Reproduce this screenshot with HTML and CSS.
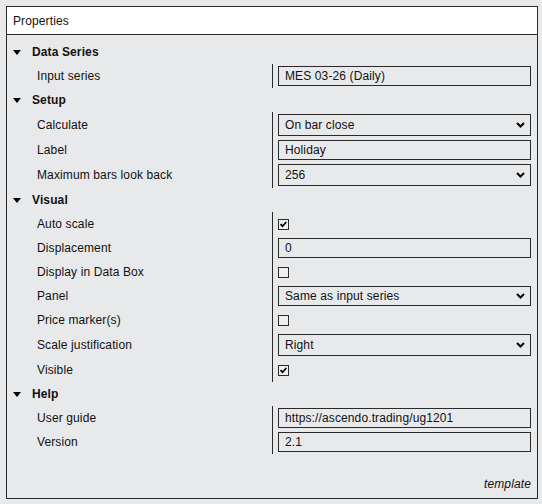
FILE: index.html
```html
<!DOCTYPE html>
<html>
<head>
<meta charset="utf-8">
<link rel="stylesheet" href="styles.css">
</head>
<body>
<div class="panel">
  <div class="title">Properties</div>
  <div class="content">
    <div class="group">
      <div class="ghead"><span class="tri"></span><span>Data Series</span></div>
      <div class="rows">
        <div class="lbl">Input series</div>
        <div class="val"><div class="field">MES 03-26 (Daily)</div></div>
      </div>
    </div>
    <div class="group">
      <div class="ghead"><span class="tri"></span><span>Setup</span></div>
      <div class="rows">
        <div class="lbl tall">Calculate</div>
        <div class="val tall"><div class="field sel">On bar close<svg class="chev" width="9" height="6" viewBox="0 0 9 6"><path d="M1 1L4.5 4.5L8 1" fill="none" stroke="#000" stroke-width="2"/></svg></div></div>
        <div class="lbl">Label</div>
        <div class="val"><div class="field">Holiday</div></div>
        <div class="lbl tall">Maximum bars look back</div>
        <div class="val tall"><div class="field sel">256<svg class="chev" width="9" height="6" viewBox="0 0 9 6"><path d="M1 1L4.5 4.5L8 1" fill="none" stroke="#000" stroke-width="2"/></svg></div></div>
      </div>
    </div>
    <div class="group">
      <div class="ghead"><span class="tri"></span><span>Visual</span></div>
      <div class="rows">
        <div class="lbl">Auto scale</div>
        <div class="val"><span class="cb"><svg width="9" height="9" viewBox="0 0 9 9"><path d="M1.5 4.2L3.5 6.2L7.3 2" fill="none" stroke="#000" stroke-width="1.7"/></svg></span></div>
        <div class="lbl">Displacement</div>
        <div class="val"><div class="field">0</div></div>
        <div class="lbl">Display in Data Box</div>
        <div class="val"><span class="cb"></span></div>
        <div class="lbl">Panel</div>
        <div class="val"><div class="field sel">Same as input series<svg class="chev" width="9" height="6" viewBox="0 0 9 6"><path d="M1 1L4.5 4.5L8 1" fill="none" stroke="#000" stroke-width="2"/></svg></div></div>
        <div class="lbl">Price marker(s)</div>
        <div class="val"><span class="cb"></span></div>
        <div class="lbl tall">Scale justification</div>
        <div class="val tall"><div class="field sel">Right<svg class="chev" width="9" height="6" viewBox="0 0 9 6"><path d="M1 1L4.5 4.5L8 1" fill="none" stroke="#000" stroke-width="2"/></svg></div></div>
        <div class="lbl">Visible</div>
        <div class="val"><span class="cb"><svg width="9" height="9" viewBox="0 0 9 9"><path d="M1.5 4.2L3.5 6.2L7.3 2" fill="none" stroke="#000" stroke-width="1.7"/></svg></span></div>
      </div>
    </div>
    <div class="group">
      <div class="ghead"><span class="tri"></span><span>Help</span></div>
      <div class="rows">
        <div class="lbl">User guide</div>
        <div class="val"><div class="field">https://ascendo.trading/ug1201</div></div>
        <div class="lbl">Version</div>
        <div class="val"><div class="field">2.1</div></div>
      </div>
    </div>
    <div class="footer">template</div>
  </div>
</div>
</body>
</html>
```

FILE: styles.css
```css
html, body {
  margin: 0;
  padding: 0;
  background: #e8e9ea;
}
body {
  font-family: "Liberation Sans", Arial, sans-serif;
  font-size: 12px;
  letter-spacing: 0.12px;
  color: #111;
}
.panel {
  margin: 6px 0 0 6px;
  width: 530px;
  height: 491px;
  border: 1px solid #2a2a2a;
  display: flex;
  flex-direction: column;
  box-sizing: content-box;
}
.title {
  height: 27px;
  background: #fff;
  border-bottom: 1px solid #2a2a2a;
  padding-left: 6px;
  display: flex;
  align-items: center;
}
.content {
  flex: 1;
  display: flex;
  flex-direction: column;
  padding-top: 5px;
}
.ghead {
  height: 24px;
  display: flex;
  align-items: center;
  padding-left: 6px;
  font-weight: bold;
}
.tri {
  width: 0;
  height: 0;
  border-left: 4px solid transparent;
  border-right: 4px solid transparent;
  border-top: 5px solid #000;
  margin-right: 11px;
}
.rows {
  display: grid;
  grid-template-columns: 265px 1fr;
}
.lbl {
  height: 24px;
  display: flex;
  align-items: center;
  padding-left: 30px;
}
.val {
  height: 24px;
  border-left: 1px solid #2a2a2a;
  padding: 0 6px 0 5px;
  display: flex;
  align-items: center;
}
.tall {
  height: 26px;
}
.field {
  flex: 1;
  height: 18px;
  border: 1px solid #2a2a2a;
  padding-left: 6px;
  display: flex;
  align-items: center;
}
.tall .field {
  height: 20px;
}
.sel {
  justify-content: space-between;
  padding-right: 5px;
}
.chev {
  display: block;
}
.cb {
  width: 9px;
  height: 9px;
  border: 1px solid #2a2a2a;
  background: #eeeff0;
  display: flex;
  align-items: center;
  justify-content: center;
}
.cb svg {
  display: block;
}
.footer {
  margin-top: auto;
  text-align: right;
  font-style: italic;
  padding: 0 6px 7px 0;
}
```
